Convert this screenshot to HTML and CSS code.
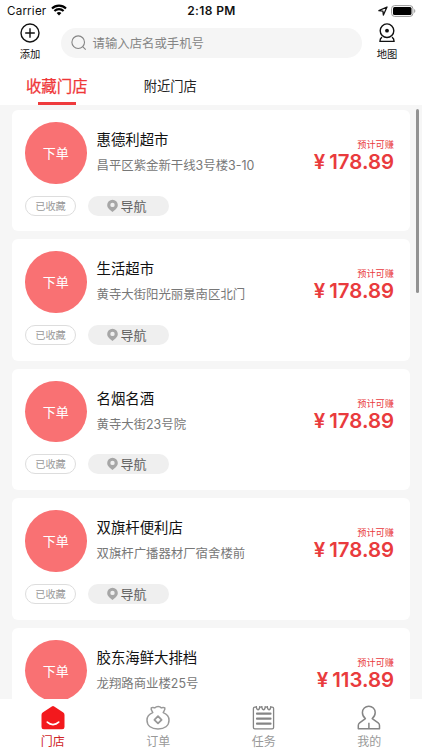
FILE: index.html
```html
<!DOCTYPE html>
<html lang="zh-CN">
<head>
<meta charset="utf-8">
<title>门店</title>
<link rel="stylesheet" href="styles.css">
</head>
<body>
<svg class="defs" width="0" height="0">
  <symbol id="pin" viewBox="0 0 11 14"><path fill-rule="evenodd" d="M5.5 .7A5.3 5.3 0 0 0 .2 6C.2 9.3 3.2 10.9 5.5 13.1 7.8 10.9 10.8 9.3 10.8 6A5.3 5.3 0 0 0 5.5 .7ZM5.5 3.7a2.2 2.2 0 1 1 0 4.4a2.2 2.2 0 0 1 0-4.4Z" fill="#a6a6a6"/></symbol>
</svg>
<div class="app">
  <div class="status">
    <span class="carrier">Carrier</span>
    <svg class="wifi" width="16" height="12" viewBox="0 0 16 12"><path d="M1 4.5a10 10 0 0 1 14 0M3.4 7a6.6 6.6 0 0 1 9.2 0" fill="none" stroke="#000" stroke-width="2.1"/><path d="M5.6 9.1a3.5 3.5 0 0 1 4.8 0L8 11.5Z"/></svg>
    <span class="time">2:18 PM</span>
    <svg class="loc" width="10" height="10" viewBox="0 0 10 10"><path d="M.9 4.7L9 1 5.4 9.1 4.9 5.1Z" fill="none" stroke="#111" stroke-width="1.3" stroke-linejoin="round"/></svg>
    <svg class="battery" width="25" height="12" viewBox="0 0 25 12"><rect x=".6" y=".6" width="21.3" height="10.8" rx="3" fill="none" stroke="#999" stroke-width="1"/><rect x="2" y="2" width="18.5" height="8" rx="1.5"/><path d="M23.2 4v4c1.5-.5 1.5-3.5 0-4Z" fill="#999"/></svg>
  </div>
  <header class="top">
    <div class="action add">
      <svg width="20" height="20" viewBox="0 0 20 20" fill="none" stroke="#111" stroke-width="1.4"><circle cx="10" cy="10" r="9"/><path d="M10 5.2v9.6M5.2 10h9.6"/></svg>
      <span>添加</span>
    </div>
    <div class="search">
      <svg width="16" height="16" viewBox="0 0 16 16" fill="none" stroke="#858585" stroke-width="1.1"><circle cx="7.2" cy="7.2" r="6.3"/><path d="M11.7 11.7l3 3"/></svg>
      <span>请输入店名或手机号</span>
    </div>
    <div class="action map">
      <svg width="16" height="20" viewBox="0 0 16 20" fill="none" stroke="#111" stroke-width="1.4"><circle cx="8" cy="7.7" r="6.8"/><circle cx="8" cy="7.7" r="1.9" fill="#111" stroke="none"/><path d="M3 14.2C1.6 15 .9 16.8 .9 18.4h14.2c0-1.6-.7-3.4-2.1-4.2" stroke-linejoin="round"/></svg>
      <span>地图</span>
    </div>
  </header>
  <nav class="tabs"><span class="tab active">收藏门店</span><span class="tab">附近门店</span></nav>
  <main class="list">
    <article class="card"><div class="main"><div class="order">下单</div><div class="info"><h2>惠德利超市</h2><p>昌平区紫金新干线3号楼3-10</p></div><div class="earn"><small>预计可赚</small><b><i>¥</i>178.89</b></div></div><div class="buttons"><span class="saved">已收藏</span><span class="go"><svg width="11" height="14"><use href="#pin"/></svg>导航</span></div></article>
    <article class="card"><div class="main"><div class="order">下单</div><div class="info"><h2>生活超市</h2><p>黄寺大街阳光丽景南区北门</p></div><div class="earn"><small>预计可赚</small><b><i>¥</i>178.89</b></div></div><div class="buttons"><span class="saved">已收藏</span><span class="go"><svg width="11" height="14"><use href="#pin"/></svg>导航</span></div></article>
    <article class="card"><div class="main"><div class="order">下单</div><div class="info"><h2>名烟名酒</h2><p>黄寺大街23号院</p></div><div class="earn"><small>预计可赚</small><b><i>¥</i>178.89</b></div></div><div class="buttons"><span class="saved">已收藏</span><span class="go"><svg width="11" height="14"><use href="#pin"/></svg>导航</span></div></article>
    <article class="card"><div class="main"><div class="order">下单</div><div class="info"><h2>双旗杆便利店</h2><p>双旗杆广播器材厂宿舍楼前</p></div><div class="earn"><small>预计可赚</small><b><i>¥</i>178.89</b></div></div><div class="buttons"><span class="saved">已收藏</span><span class="go"><svg width="11" height="14"><use href="#pin"/></svg>导航</span></div></article>
    <article class="card"><div class="main"><div class="order">下单</div><div class="info"><h2>胶东海鲜大排档</h2><p>龙翔路商业楼25号</p></div><div class="earn"><small>预计可赚</small><b><i>¥</i>113.89</b></div></div></article>
    <div class="scrollbar"></div>
  </main>
  <footer class="bottom">
    <div class="item current"><svg width="26" height="26" viewBox="0 0 26 26"><path d="M11.8 1.4Q13 .5 14.2 1.4L23.3 7.6Q24.5 8.5 24.5 10V22Q24.5 24.3 22.2 24.3H3.8Q1.5 24.3 1.5 22V10Q1.5 8.5 2.7 7.6Z" fill="#f3191d"/><path d="M7.3 17.2c3.3 3.2 8.1 3.2 11.4 0" fill="none" stroke="#fff" stroke-width="1.7" stroke-linecap="round"/></svg><span>门店</span></div>
    <div class="item"><svg width="26" height="26" viewBox="0 0 26 26" fill="none" stroke="#999" stroke-width="1.5" stroke-linejoin="round"><path d="M7.8 7.6C4.5 8.8 2 11.6 2 15.2c0 5.5 4.5 8.7 11 8.7s11-3.2 11-8.7c0-3.6-2.5-6.4-5.8-7.6C18.8 6 20.5 4.8 19.8 2.8c-1.2-.8-2.4-.3-3.6.1C15 .9 11.4.9 9.9 2.9 8.6 2.5 7.5 2 6.3 2.8 5.5 4.8 7.2 6 7.8 7.6Z"/><path d="M13 11.2l3.6 3.6-3.6 3.6-3.6-3.6Z" stroke-width="1.8"/></svg><span>订单</span></div>
    <div class="item"><svg width="26" height="26" viewBox="0 0 26 26" fill="none" stroke="#858585" stroke-width="1.3"><path d="M5.5 2.2H3.8Q2.4 2.2 2.4 3.6V22.5Q2.4 23.9 3.8 23.9H21.2Q22.6 23.9 22.6 22.5V3.6Q22.6 2.2 21.2 2.2H20"/><path d="M5.3 1.1c.1 5 3.2 5 3.5 0M10.8 1.1c.1 5 3.2 5 3.5 0M16.3 1.1c.1 5 3.2 5 3.5 0M8.8 2.2h2M14.3 2.2h2"/><path d="M6 8.7h13.5M6 13.7h13.5M6 18.7h13.5" stroke-width="2.2" stroke-linecap="round"/></svg><span>任务</span></div>
    <div class="item"><svg width="26" height="26" viewBox="0 0 26 26" fill="none" stroke="#858585" stroke-width="1.5" stroke-linejoin="round"><path d="M9.4 13.6C7.4 12 6.4 9.8 6.4 7.6a6.4 6.4 0 0 1 12.8 0c0 2.2-1 4.4-3 6l6 4.2c1.1.8 1.3 1.5 1.3 2.6v3.4H2.3v-3.4c0-1.1.2-1.8 1.3-2.6Z"/><path d="M12.9 17.8v6"/></svg><span>我的</span></div>
  </footer>
</div>
</body>
</html>
```
FILE: styles.css
```css
* { box-sizing: border-box; }
body { margin: 0; font-family: Inter, "Noto Sans CJK SC", sans-serif; color: #111; }
.defs { position: absolute; }
.app { width: 422px; height: 750px; display: flex; flex-direction: column; overflow: hidden; background: #fff; }
svg { display: block; flex: none; }
.status { display: grid; grid-template-columns: 43px 16px 1fr 11px 27px; height: 22px; padding: 0 5px 0 7px; align-items: center; }
.carrier { font-size: 11.6px; letter-spacing: .2px; }
.status .wifi { margin: -3px 0 0 1px; }
.time { font-weight: 600; justify-self: center; font-size: 12px; letter-spacing: .4px; margin: -1px 22px 0 0; }
.loc { margin-left: -1px; }
.battery { margin: -1px 0 0 1px; }
.top { display: flex; height: 44px; padding: 0 12px 0 11px; flex: none; }
.action { width: 38px; display: flex; flex-direction: column; align-items: center; gap: 3px; padding-top: 1px; font-size: 10.3px; line-height: 16px; }
.action span { white-space: nowrap; }
.search { margin: 6px 6px 0 11.5px; height: 30px; width: 301.5px; border-radius: 15px; background: #f5f5f5; display: flex; align-items: center; gap: 6px; padding-left: 10px; color: #858585; font-size: 12.4px; line-height: 30px; }
.search span { padding-top: 2px; }
.tabs { display: flex; height: 39px; flex: none; }
.tab { width: 113.5px; display: flex; align-items: center; justify-content: center; font-size: 13.3px; line-height: 39px; position: relative; color: #222; padding-top: 2px; }
.tab.active { color: #ef3638; font-size: 15.4px; -webkit-text-stroke: .25px #ef3638; }
.tab.active::after { content: ""; position: absolute; left: 38px; bottom: 0; width: 38px; height: 3px; background: #ef3b3d; }
.list { position: relative; flex: 1; min-height: 0; overflow: hidden; background: #f6f6f6; display: flex; flex-direction: column; gap: 8px; padding: 5px 12px 0; }
.card { flex: none; height: 121.4px; background: #fff; border-radius: 6px; padding: 12px 16px 0 13px; }
.main { display: flex; height: 61.5px; }
.order { width: 61.5px; height: 61.5px; border-radius: 50%; background: #f97173; color: #fff; font-size: 13px; line-height: 62px; text-align: center; }
.info { margin-left: 10px; flex: 1; padding-top: 7px; white-space: nowrap; }
h2 { margin: 0; font-size: 14.4px; font-weight: 400; line-height: 22px; color: #111; }
.info p { margin: 5px 0 0; font-size: 12.4px; line-height: 20px; color: #777; }
.earn { display: flex; flex-direction: column; align-items: flex-end; color: #e93b3d; padding-top: 17px; white-space: nowrap; }
.earn small { font-size: 9.2px; line-height: 12px; }
.earn b { display: flex; font-size: 20.4px; line-height: 22px; font-weight: 600; }
.earn i { font-style: normal; margin-right: 4px; }
.buttons { display: flex; gap: 12px; margin-top: 12px; }
.saved { width: 51px; height: 20px; border: 1px solid #ddd; border-radius: 10px; font-size: 10.2px; line-height: 18px; text-align: center; color: #999; }
.go { width: 81px; height: 20px; border-radius: 10px; background: #efefef; color: #606060; display: flex; align-items: center; justify-content: center; gap: 2px; padding-right: 3px; font-size: 13px; line-height: 20px; }
.scrollbar { position: absolute; right: 3px; top: 4px; width: 3px; height: 184px; border-radius: 2px; background: #929292; }
.bottom { height: 51px; flex: none; display: grid; grid-template-columns: repeat(4, 1fr); background: #fff; }
.item { display: flex; flex-direction: column; align-items: center; padding-top: 6px; font-size: 12px; line-height: 22px; color: #999; }
.item.current { color: #cf2527; }
```
